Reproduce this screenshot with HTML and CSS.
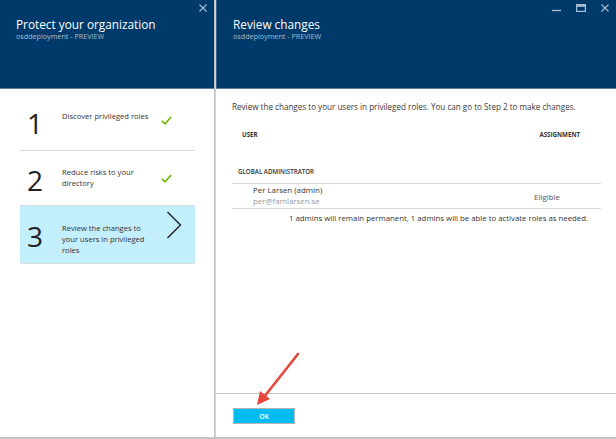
FILE: index.html
```html
<!DOCTYPE html>
<html lang="en">

<head>
    <meta charset="UTF-8">
    <title>Review changes</title>
    <link rel="stylesheet" href="styles.css">
</head>

<body>
    <div class="portal">
        <!-- Left blade: wizard steps -->
        <div class="blade blade-steps">
            <div class="blade-header">
                <div class="blade-controls">
                    <svg width="8" height="8" viewBox="0 0 8 8"><path d="M0.5 0.5 L7.5 7.5 M7.5 0.5 L0.5 7.5" stroke="#a9bfd6" stroke-width="1.1" fill="none"/></svg>
                </div>
                <h1>Protect your organization</h1>
                <div class="subtitle">osddeployment - PREVIEW</div>
            </div>
            <div class="blade-body">
                <div class="step step-one">
                    <div class="step-num">1</div>
                    <div class="step-text">Discover privileged roles</div>
                    <svg class="check" width="11" height="9" viewBox="0 0 11 9"><path d="M0.8 4.8 L4 7.8 L10.2 1" stroke="#6bb700" stroke-width="1.6" fill="none"/></svg>
                </div>
                <div class="step step-two">
                    <div class="step-num">2</div>
                    <div class="step-text">Reduce risks to your directory</div>
                    <svg class="check" width="11" height="9" viewBox="0 0 11 9"><path d="M0.8 4.8 L4 7.8 L10.2 1" stroke="#6bb700" stroke-width="1.6" fill="none"/></svg>
                </div>
                <div class="step step-active">
                    <div class="step-num">3</div>
                    <div class="step-text">Review the changes to your users in privileged roles</div>
                    <svg class="chevron" width="16" height="28" viewBox="0 0 16 28"><path d="M1.5 1 L14.5 14 L1.5 27" stroke="#222" stroke-width="1.4" fill="none"/></svg>
                </div>
            </div>
        </div>

        <!-- Right blade: review -->
        <div class="blade blade-review">
            <div class="blade-header">
                <div class="blade-controls">
                    <svg width="9" height="8" viewBox="0 0 9 8"><path d="M0 6.5 H9" stroke="#a9bfd6" stroke-width="1.3"/></svg>
                    <svg width="10" height="8" viewBox="0 0 10 8"><rect x="0.6" y="0.6" width="8.8" height="6.8" stroke="#a9bfd6" stroke-width="1.2" fill="none"/><path d="M0.6 2 H9.4" stroke="#a9bfd6" stroke-width="1.8"/></svg>
                    <svg width="8" height="8" viewBox="0 0 8 8"><path d="M0.5 0.5 L7.5 7.5 M7.5 0.5 L0.5 7.5" stroke="#a9bfd6" stroke-width="1.1" fill="none"/></svg>
                </div>
                <h1>Review changes</h1>
                <div class="subtitle">osddeployment - PREVIEW</div>
            </div>
            <div class="blade-body">
                <div class="review-content">
                    <p class="intro">Review the changes to your users in privileged roles. You can go to Step 2 to make changes.</p>
                    <div class="table-head">
                        <span>USER</span>
                        <span>ASSIGNMENT</span>
                    </div>
                    <div class="role-name">GLOBAL ADMINISTRATOR</div>
                    <div class="user-row">
                        <div class="user">
                            <div class="user-name">Per Larsen (admin)</div>
                            <div class="user-mail">per@famlarsen.se</div>
                        </div>
                        <div class="assignment">Eligible</div>
                    </div>
                    <div class="summary">1 admins will remain permanent, 1 admins will be able to activate roles as needed.</div>
                </div>
                <div class="blade-footer">
                    <button class="ok-button">OK</button>
                </div>
            </div>
            <!-- annotation arrow -->
            <svg class="arrow" width="50" height="56" viewBox="0 0 50 56">
                <path d="M44 3 L10 46" stroke="#e5473c" stroke-width="2.6" stroke-linecap="round" fill="none"/>
                <path d="M3 54 L6 40 L16 48 Z" fill="#e5473c"/>
            </svg>
        </div>
    </div>
</body>

</html>
```

FILE: styles.css
```css
body {
    margin: 0;
    background-color: white;
    font-family: "Open Sans", "Noto Sans", sans-serif;
    color: #333;
}

.portal {
    display: flex;
    width: 616px;
    height: 439px;
    box-sizing: border-box;
    border-bottom: 2px solid #c4c4c4;
}

.blade {
    display: flex;
    flex-direction: column;
    position: relative;
}

.blade-steps {
    width: 214px;
    border-right: 1px solid #c2c2c2;
}

.blade-review {
    flex: 1;
    border-left: 1px solid #d4d4d4;
}

.blade-header {
    height: 89px;
    box-sizing: border-box;
    background-color: #003a6b;
    border-bottom: 1px solid #5f7f9f;
    padding: 16px 16px 0;
    position: relative;
    color: white;
}

.blade-review .blade-header {
    border-left: 1px solid #335f8a;
}

.blade-header h1 {
    margin: 0;
    font-size: 11.8px;
    font-weight: normal;
    color: #fff;
}

.subtitle {
    font-size: 7.2px;
    color: #a8bcd0;
    margin-top: -1px;
}

.blade-controls {
    position: absolute;
    top: 4px;
    right: 7px;
    display: flex;
    gap: 15px;
    align-items: flex-start;
}

.blade-body {
    flex: 1;
    display: flex;
    flex-direction: column;
}

/* wizard steps */
.blade-steps .blade-body {
    padding: 0 19px 0 20px;
}

.step {
    display: flex;
    align-items: center;
    height: 55px;
    border-bottom: 1px solid #dcdcdc;
    padding-left: 7px;
}

.step-num {
    width: 35px;
    flex-shrink: 0;
    font-size: 28px;
    color: #222;
    line-height: 1;
}

.step-text {
    width: 92px;
    font-size: 7.6px;
    line-height: 11px;
    color: #333;
}

.check {
    margin-left: auto;
    margin-right: 23px;
}

.step-one {
    height: 61px;
}

.step-one .step-num {
    margin-top: 7px;
}

.step-one .step-text {
    width: 100px;
    margin-top: -7px;
}

.step-one .check {
    margin-top: 1px;
}

.step-two {
    height: 54px;
}

.step-two .step-num {
    margin-top: 3px;
}

.step-active {
    background-color: #c3eefb;
    height: 57px;
    border-bottom: 1px solid #dcdcdc;
}

.step-active .step-num {
    margin-top: 2px;
}

.step-active .step-text {
    margin-top: 9px;
}

.chevron {
    margin-left: auto;
    margin-right: 13px;
    margin-top: -20px;
}

/* review blade */
.review-content {
    flex: 1;
    padding: 0 15px 0 16px;
}

.intro {
    font-size: 8.1px;
    margin: 12px 0 0;
    color: #3a3a3a;
}

.table-head {
    display: flex;
    justify-content: space-between;
    font-size: 6.2px;
    font-weight: bold;
    color: #333;
    margin-top: 18px;
    padding: 0 21px 0 10px;
}

.role-name {
    font-size: 6.2px;
    font-weight: 600;
    color: #333;
    margin-top: 28px;
    padding: 0 0 7px 6px;
    border-bottom: 1px solid #d6d6d6;
}

.user-row {
    display: flex;
    align-items: center;
    justify-content: space-between;
    padding: 1px 41px 1px 21px;
    border-bottom: 1px solid #d6d6d6;
}

.user-name {
    font-size: 7.9px;
    line-height: 11px;
    color: #333;
}

.user-mail {
    font-size: 7.9px;
    line-height: 11px;
    color: #999;
}

.assignment {
    font-size: 7.9px;
    color: #555;
    margin-top: 2px;
}

.summary {
    font-size: 7.8px;
    color: #333;
    margin-top: 4px;
    padding-left: 57px;
}

.blade-footer {
    height: 44px;
    border-top: 1px solid #c4c4c4;
    padding: 14px 0 0 17px;
    box-sizing: border-box;
}

.ok-button {
    display: block;
    width: 62px;
    height: 16px;
    background-color: #00bcf2;
    border: 1px solid #b4b4b4;
    color: white;
    font-family: "Open Sans", sans-serif;
    font-size: 6.8px;
    font-weight: 600;
    padding: 0;
}

.arrow {
    position: absolute;
    left: 38px;
    top: 351px;
}
```
